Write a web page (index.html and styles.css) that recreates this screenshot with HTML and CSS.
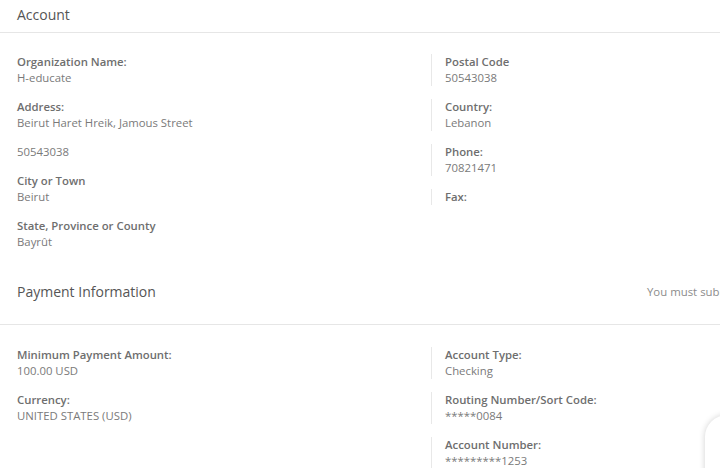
FILE: index.html
```html
<!DOCTYPE html>
<html lang="en">
<head>
<meta charset="utf-8">
<title>Account</title>
<link rel="stylesheet" href="styles.css">
</head>
<body>
<div class="page">
  <section class="section">
    <div class="sec-head head-account">
      <h2 class="sec-title">Account</h2>
    </div>
    <div class="sec-body body-account">
      <div class="col">
        <div class="item"><div class="label">Organization Name:</div><div class="value">H-educate</div></div>
        <div class="item"><div class="label">Address:</div><div class="value">Beirut Haret Hreik, Jamous Street</div></div>
        <div class="item"><div class="value">50543038</div></div>
        <div class="item"><div class="label">City or Town</div><div class="value">Beirut</div></div>
        <div class="item"><div class="label">State, Province or County</div><div class="value">Bayrût</div></div>
      </div>
      <div class="col col-right">
        <div class="item"><div class="label">Postal Code</div><div class="value">50543038</div></div>
        <div class="item"><div class="label">Country:</div><div class="value">Lebanon</div></div>
        <div class="item"><div class="label">Phone:</div><div class="value">70821471</div></div>
        <div class="item"><div class="label">Fax:</div></div>
      </div>
    </div>
  </section>
  <section class="section">
    <div class="sec-head head-payment">
      <h2 class="sec-title">Payment Information</h2>
      <p class="note">You must submit tax information before you can receive payments.</p>
    </div>
    <div class="sec-body body-payment">
      <div class="col">
        <div class="item"><div class="label">Minimum Payment Amount:</div><div class="value">100.00 USD</div></div>
        <div class="item"><div class="label">Currency:</div><div class="value">UNITED STATES (USD)</div></div>
      </div>
      <div class="col col-right">
        <div class="item"><div class="label">Account Type:</div><div class="value">Checking</div></div>
        <div class="item"><div class="label">Routing Number/Sort Code:</div><div class="value">*****0084</div></div>
        <div class="item"><div class="label">Account Number:</div><div class="value">*********1253</div></div>
      </div>
    </div>
  </section>
</div>
<div class="chat-widget"></div>
</body>
</html>
```
FILE: styles.css
```css
html, body {
  margin: 0;
  padding: 0;
  background: #ffffff;
  overflow: hidden;
  height: 100%;
}
body {
  font-family: "Open Sans", "Liberation Sans", sans-serif;
  color: #6b6b6b;
  -webkit-font-smoothing: antialiased;
}
.page {
  width: 1100px;
}
.sec-head {
  border-bottom: 1px solid #e6e6e6;
  padding-left: 17px;
  display: grid;
  grid-template-columns: 630px 1fr;
  align-items: center;
}
.head-account {
  padding-top: 6px;
  padding-bottom: 8px;
}
.head-payment {
  padding-top: 20px;
  padding-bottom: 23px;
}
.sec-title {
  margin: 0;
  font-size: 14px;
  line-height: 18px;
  font-weight: 400;
  color: #555555;
}
.note {
  margin: 0;
  font-size: 11.4px;
  line-height: 18px;
  color: #8c8c8c;
  white-space: nowrap;
}
.sec-body {
  display: grid;
  grid-template-columns: 414px 414px;
  padding-left: 17px;
  align-items: start;
}
.body-account {
  padding-top: 21px;
  padding-bottom: 13px;
}
.body-payment {
  padding-top: 22px;
}
.col {
  display: flex;
  flex-direction: column;
  gap: 13px;
}
.col-right .item {
  border-left: 1px solid #e8e8e8;
  padding-left: 13px;
}
.label {
  font-size: 11.35px;
  line-height: 16px;
  font-weight: 600;
  color: #6e6e6e;
}
.value {
  font-size: 11.35px;
  line-height: 16px;
  font-weight: 400;
  color: #7a7a7a;
}
.chat-widget {
  position: fixed;
  left: 705px;
  top: 415px;
  width: 80px;
  height: 100px;
  background: #ffffff;
  border-radius: 22px 0 0 0;
  box-shadow: 0 0 6px rgba(0, 0, 0, 0.18);
}
```
